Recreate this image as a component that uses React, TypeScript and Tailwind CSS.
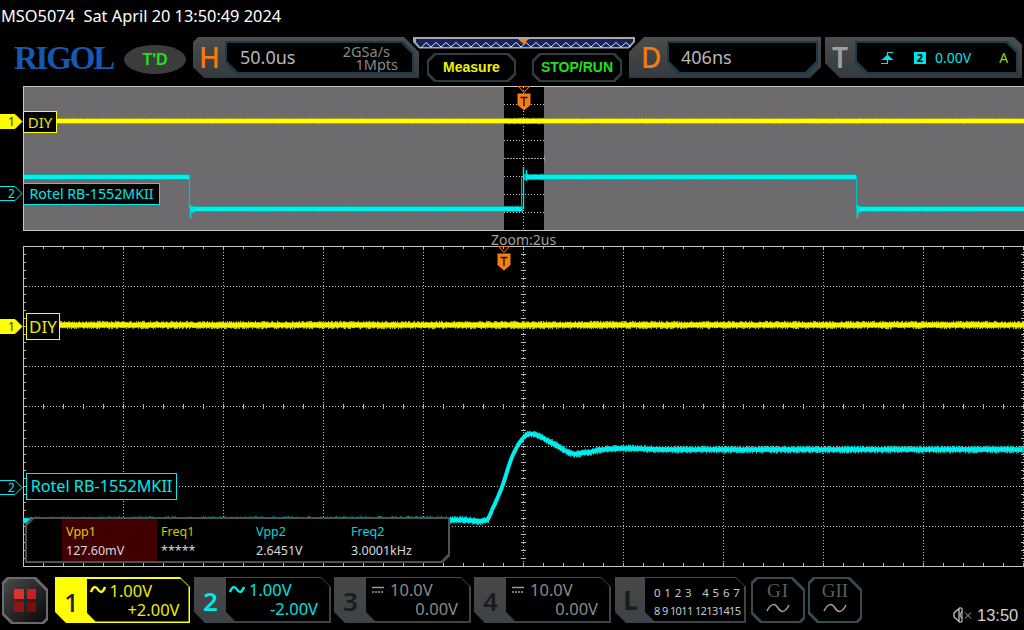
import React from "react";

const FONT = "[font-family:'Noto_Sans','Open_Sans',sans-serif]";
const ARIAL = "[font-family:'Liberation_Sans',sans-serif]";

function rng(seed: number) {
  let s = seed;
  return () => (s = (s * 16807) % 2147483647) / 2147483647;
}

function cr(pts: number[][], x: number) {
  let i = 0;
  while (i < pts.length - 2 && x > pts[i + 1][0]) i++;
  const p1 = pts[i];
  const p2 = pts[i + 1];
  const p0 = pts[Math.max(0, i - 1)];
  const p3 = pts[Math.min(pts.length - 1, i + 2)];
  const t = Math.min(1, Math.max(0, (x - p1[0]) / (p2[0] - p1[0])));
  const a = p1[1];
  const m1 = ((p2[1] - p0[1]) / (p2[0] - p0[0] || 1)) * (p2[0] - p1[0]);
  const m2 = ((p3[1] - p1[1]) / (p3[0] - p1[0] || 1)) * (p2[0] - p1[0]);
  const b = p2[1];
  const t2 = t * t;
  const t3 = t2 * t;
  return (2 * t3 - 3 * t2 + 1) * a + (t3 - 2 * t2 + t) * m1 + (-2 * t3 + 3 * t2) * b + (t3 - t2) * m2;
}

function fuzz(fn: (x: number) => number, x0: number, x1: number, base: number, amp: number, seed: number) {
  const r = rng(seed);
  let d = "";
  for (let x = x0; x <= x1; x += 1) {
    const y = fn(x);
    const u = base + r() * amp;
    const v = base + r() * amp;
    d += `M${x + 0.5} ${(y - u).toFixed(1)}V${(y + v).toFixed(1)}`;
  }
  return d;
}

function Ticks({ w, h, cx, cy, ystep, xstart }: { w: number; h: number; cx: number; cy: number; ystep: number; xstart: number }) {
  let d = "";
  for (let x = xstart; x < w; x += 20) {
    d += `M${x + 0.5} 0v3M${x + 0.5} ${h}v-3M${x + 0.5} ${cy - 2}v5`;
  }
  for (let y = ystep; y < h; y += ystep) {
    d += `M0 ${y + 0.5}h3M${w} ${y + 0.5}h-3M${cx - 2} ${y + 0.5}h5`;
  }
  return <path d={d} stroke="#b8b8b8" strokeWidth="1" fill="none" shapeRendering="crispEdges" />;
}

function ZoomPlot() {
  // panel coordinates: x-23, y-86
  const yellowY = 35;
  const step = (x: number) => {
    if (x < 167) return 91;
    if (x < 500) return 123;
    if (x < 833) return 91;
    return 123;
  };
  const hd = [];
  for (let y = 18; y < 140; y += 18) hd.push(y);
  return (
    <svg className="absolute inset-0 block" width="1001" height="145" viewBox="0 0 1001 145">
      <rect x="0" y="0" width="1001" height="145" fill="#6d6b6d" />
      <rect x="481" y="1" width="40" height="143" fill="#000" />
      {hd.map((y) => (
        <path
          key={y}
          d={`M481 ${y + 0.5}H521`}
          stroke={y === 72 ? "#a0a0a0" : "#c8c8c8"}
          strokeWidth="1"
          strokeDasharray={y === 72 ? "2 1" : "1 2"}
          shapeRendering="crispEdges"
        />
      ))}
      <path d="M500.5 1V144" stroke="#c8c8c8" strokeWidth="1" strokeDasharray="1 2" shapeRendering="crispEdges" />
      <path d="M521.5 70v5" stroke="#999" strokeWidth="1" />
      <path d={fuzz(() => yellowY, 0, 1000, 2.6, 0.8, 11)} stroke="#a8a800" strokeWidth="1" />
      <rect x="0" y={yellowY - 2} width="1001" height="4" fill="#ffff00" />
      <path d={fuzz(step, 0, 1000, 2.6, 0.8, 23)} stroke="#04a8a8" strokeWidth="1" />
      <path d="M0 91H166.5M168 123H499M503 91H833M835 123H1001" stroke="#00f0f0" strokeWidth="4" fill="none" />
      <path d="M166.5 89V122M833.5 89V122" stroke="#00c4c4" strokeWidth="1.2" fill="none" />
      <path d="M167.5 119V132M834.5 119V132" stroke="#00e0e0" strokeWidth="1.6" fill="none" />
      <path d="M170 120V127M837 120V127" stroke="#00e0e0" strokeWidth="1.6" fill="none" />
      <path d="M498.5 123V90" stroke="#00b0b0" strokeWidth="1" />
      <path d="M500.5 123V81M503.5 84V95" stroke="#00e8e8" strokeWidth="1.4" />
      <path d="M0.5 0V145M0 0.5H1001M0 144.5H1001" stroke="#c4c4c4" strokeWidth="1" fill="none" shapeRendering="crispEdges" />
    </svg>
  );
}

const RISE = [
  [0, 274.5],
  [441, 274],
  [464, 274],
  [469, 264],
  [479, 241],
  [489, 211],
  [500, 192],
  [509, 188],
  [527, 196],
  [547, 207],
  [560, 207],
  [580, 203.5],
  [600, 202.5],
  [647, 203.5],
  [1001, 203.5],
];

function MainPlot() {
  const v = [100, 200, 300, 400, 600, 700, 800, 900, 1000];
  const h = [40, 80, 120, 160, 200, 240, 280];
  const fn = (x: number) => cr(RISE, x);
  let line = "M0 " + fn(0).toFixed(1);
  for (let x = 1; x <= 1000; x += 2) line += `L${x} ${fn(x).toFixed(1)}`;
  const ty = 79;
  return (
    <svg className="absolute inset-0 block" width="1001" height="321" viewBox="0 0 1001 321">
      {v.map((x) => (
        <path key={x} d={`M${x + 0.5} 0V320`} stroke="#c0c0c0" strokeWidth="1" strokeDasharray="1 2" shapeRendering="crispEdges" />
      ))}
      {h.map((y) => (
        <path key={y} d={`M0 ${y + 0.5}H1001`} stroke="#c0c0c0" strokeWidth="1" strokeDasharray="1 2" shapeRendering="crispEdges" />
      ))}
      <path d="M500.5 0V320" stroke="#c0c0c0" strokeWidth="1" strokeDasharray="1 2" shapeRendering="crispEdges" />
      <Ticks w={1001} h={320} cx={500} cy={160} ystep={8} xstart={20} />
      <path d="M0.5 0V321M0 0.5H1001M0 320.5H1001" stroke="#c4c4c4" strokeWidth="1" fill="none" shapeRendering="crispEdges" />
      <path d={fuzz(() => ty, 30, 1000, 2.2, 2, 37)} stroke="#c8c800" strokeWidth="1" />
      <rect x="30" y={ty - 2.2} width="971" height="4.4" fill="#f4f400" />
      <path d={fuzz(fn, 0, 1000, 2, 2, 53)} stroke="#04c4c4" strokeWidth="1" />
      <path d={line} stroke="#00eeee" strokeWidth="4" fill="none" />
    </svg>
  );
}

function TMarker() {
  return (
    <svg width="16" height="25" viewBox="0 0 16 25" className="block">
      <path d="M2.5 0.5H13.5L8 6.5Z" fill="none" stroke="#f57f17" strokeWidth="1" />
      <path d="M1.5 7.5H14.5V19L8 24.5L1.5 19Z" fill="#f57f17" />
      <path d="M4.5 11.5H11.5M8 11.5V20" stroke="#2a1400" strokeWidth="1.4" fill="none" />
    </svg>
  );
}

function Tag({ n, filled, color }: { n: string; filled?: boolean; color: string }) {
  return (
    <svg width="23" height="15" viewBox="0 0 23 15" className="block">
      <path
        d="M0 0.5H15L22 7.5L15 14.5H0"
        fill={filled ? color : "#000"}
        stroke={color}
        strokeWidth="1"
      />
      <text x="11.5" y="12" textAnchor="middle" fontSize="12" fontFamily="Noto Sans" fill={filled ? "#333" : color}>
        {n}
      </text>
    </svg>
  );
}

const P_H = "[clip-path:polygon(5px_0,calc(100%-15px)_0,100%_15px,100%_100%,11px_100%,0_calc(100%-11px),0_5px)]";
const P_HI = "[clip-path:polygon(0_0,calc(100%-11px)_0,100%_11px,100%_calc(100%-0px),11px_100%,0_calc(100%-11px))]";
const P_D = "[clip-path:polygon(15px_0,100%_0,100%_calc(100%-11px),calc(100%-11px)_100%,0_100%,0_15px)]";
const P_DI = "[clip-path:polygon(0_0,100%_0,100%_calc(100%-11px),calc(100%-11px)_100%,11px_100%,0_calc(100%-11px))]";
const P_T = "[clip-path:polygon(0_0,calc(100%-8px)_0,100%_8px,100%_100%,15px_100%,0_calc(100%-15px))]";
const P_TI = "[clip-path:polygon(0_0,calc(100%-10px)_0,100%_10px,100%_100%,11px_100%,0_calc(100%-11px))]";
const P_BTN = "[clip-path:polygon(7px_0,calc(100%-7px)_0,100%_7px,100%_calc(100%-7px),calc(100%-7px)_100%,7px_100%,0_calc(100%-7px),0_7px)]";
const P_CH = "[clip-path:polygon(4px_0,calc(100%-10px)_0,100%_10px,100%_100%,11px_100%,0_calc(100%-11px),0_0)]";
const P_CHI = "[clip-path:polygon(0_0,calc(100%-8px)_0,100%_8px,100%_100%,9px_100%,0_calc(100%-9px))]";
const P_G = "[clip-path:polygon(5px_0,calc(100%-12px)_0,100%_12px,100%_calc(100%-4px),calc(100%-4px)_100%,9px_100%,0_calc(100%-9px),0_5px)]";

function Header() {
  return (
    <div className={`h-[37px] pl-px pt-[5px] text-[16.35px] leading-[22px] text-white whitespace-pre ${FONT}`}>
      MSO5074  Sat April 20 13:50:49 2024
    </div>
  );
}

function Strip() {
  let z = "M8 11";
  for (let x = 8; x < 212; x += 10) z += `L${x + 5} 5.5L${x + 10} 10`;
  return (
    <svg width="222" height="12" viewBox="0 0 222 12" className="block">
      <path d="M0 0H222V5L216 11.5H6L0 5Z" fill="#a8a8a8" />
      <path d="M3 2H220V4.5L215 10H7L3 5Z" fill="#14235c" />
      <path d={z} stroke="#e8e8e8" strokeWidth="1" fill="none" />
      <path d="M105 2H116L110.5 7Z" fill="#f5861f" />
    </svg>
  );
}

function TopButton({ label, color, w, className }: { label: string; color: string; w: string; className: string }) {
  return (
    <div className={`${w} ${className} ${P_BTN} h-[29px] p-[2px] bg-[#2f3c44]`}>
      <div className={`${P_BTN} h-full bg-black flex items-center justify-center text-[14px] font-bold ${ARIAL} ${color}`}>
        {label}
      </div>
    </div>
  );
}

function Toolbar() {
  return (
    <div className="h-[49px] flex items-start">
      <div className="ml-[14px] w-[99px] mt-[6px] h-[30px] flex items-center justify-center text-[33px] leading-[30px] font-bold tracking-[-2.2px] text-[#1558b0] [font-family:'Liberation_Serif',serif]">
        RIGOL
      </div>
      <div className={`ml-[11px] mt-[8px] w-[62px] h-[29px] rounded-[50%] bg-[#3c3c3c] flex items-center justify-center text-[16px] font-bold text-[#1ee01e] ${ARIAL}`}>
        T'D
      </div>

      <div className={`ml-[7px] w-[226px] h-[41px] flex ${P_H} bg-linear-to-b from-[#4c4c4c] to-[#333a3e]`}>
        <div className={`w-[32px] pl-[1px] text-center text-[28px] leading-[40px] font-medium text-[#f47b10] ${FONT}`}>H</div>
        <div className={`mt-[4px] w-[189px] h-[33px] p-[2px] bg-[#1b3a4a] ${P_HI}`}>
          <div className={`relative h-full bg-black pl-[13px] flex items-center text-[18px] text-[#b8b8b8] ${P_HI} ${FONT}`}>
            <span className="w-[103px]">50.0us</span>
            <div className="flex flex-col items-end w-[55px] text-[14.5px] leading-[14px] text-[#888]">
              <span className="pr-[8px]">2GSa/s</span>
              <span className="-mt-px">1Mpts</span>
            </div>
          </div>
        </div>
      </div>

      <div className="-ml-[6px] w-[222px] relative">
        <Strip />
        <div className="flex mt-[4px]">
          <TopButton label="Measure" color="text-[#f0f000]" w="w-[89px]" className="ml-[14px]" />
          <TopButton label="STOP/RUN" color="text-[#1fe01f]" w="w-[90px]" className="ml-[16px]" />
        </div>
      </div>

      <div className={`-ml-[6px] w-[192px] h-[41px] flex ${P_D} bg-linear-to-b from-[#4c4c4c] to-[#333a3e]`}>
        <div className={`w-[38px] pl-[12px] text-[28px] leading-[40px] font-medium text-[#f47b10] ${FONT}`}>D</div>
        <div className={`mt-[4px] w-[151px] h-[33px] p-[2px] bg-[#1b3a4a] ${P_DI}`}>
          <div className={`h-full bg-black pl-[12px] flex items-center text-[18px] text-[#b8b8b8] ${P_DI} ${FONT}`}>
            406ns
          </div>
        </div>
      </div>

      <div className={`ml-[4px] w-[197px] h-[41px] flex ${P_T} bg-linear-to-b from-[#4c4c4c] to-[#333a3e]`}>
        <div className={`w-[30px] pl-[7px] text-[28px] leading-[40px] font-semibold text-[#a0a0a0] ${FONT}`}>T</div>
        <div className={`mt-[4px] w-[163px] h-[33px] p-[2px] bg-[#1b3a4a] ${P_TI}`}>
          <div className={`h-full bg-black flex items-center text-[14px] text-[#00e4e4] ${P_TI} ${FONT}`}>
            <svg width="13" height="14" viewBox="0 0 13 14" className="ml-[24px] block">
              <path d="M0 12.5H6.5V1.5H12" stroke="#00e4e4" strokeWidth="1.2" fill="none" />
              <path d="M0.5 9L6.5 3.5L12.5 9Z" fill="#00e4e4" />
            </svg>
            <span className="ml-[20px] w-[12px] h-[12px] bg-[#00e4e4] text-black text-[11px] leading-[12px] text-center font-bold">2</span>
            <span className="ml-[9px]">0.00V</span>
            <span className="ml-[28px] text-[#90d800]">A</span>
          </div>
        </div>
      </div>
    </div>
  );
}

function NameBox({ text, color, cls }: { text: string; color: string; cls: string }) {
  return (
    <div className={`absolute flex items-center justify-center bg-black border ${color} ${cls} ${FONT} whitespace-nowrap`}>
      {text}
    </div>
  );
}

function MeasureBox() {
  const cols = [
    ["Vpp1", "127.60mV", "text-[#e0c800]", "bg-[#400000]"],
    ["Freq1", "*****", "text-[#c8c800]", ""],
    ["Vpp2", "2.6451V", "text-[#00d8d8]", ""],
    ["Freq2", "3.0001kHz", "text-[#00d8d8]", ""],
  ];
  const clip = "[clip-path:polygon(7px_0,100%_0,100%_calc(100%-7px),calc(100%-7px)_100%,0_100%,0_7px)]";
  return (
    <div className={`absolute left-[2px] top-[271px] w-[425px] h-[46px] p-[2px] bg-[#4c5254] ${clip}`}>
      <div className={`h-full bg-black pl-[35px] flex ${clip} ${FONT}`}>
        {cols.map(([a, b, c, bg]) => (
          <div key={a} className={`w-[95px] h-full pl-[4px] pt-[4px] ${bg}`}>
            <div className={`text-[12.5px] leading-[18px] ${c}`}>{a}</div>
            <div className="text-[12.5px] leading-[20px] text-[#d8d8d8]">{b}</div>
          </div>
        ))}
      </div>
    </div>
  );
}

function Plots() {
  return (
    <>
      <div className="relative ml-[23px] w-[1001px] h-[145px]">
        <ZoomPlot />
        <div className="absolute -left-[23px] top-[28px]"><Tag n="1" filled color="#ffff00" /></div>
        <NameBox text="DIY" color="border-[#ffff00] text-[#e8e800]" cls="left-0 top-[25px] w-[34px] h-[22px] text-[15px]" />
        <div className="absolute -left-[23px] top-[100px]"><Tag n="2" color="#00e8e8" /></div>
        <NameBox text="Rotel RB-1552MKII" color="border-[#00e8e8] text-[#00e8e8]" cls="left-0 top-[97px] w-[137px] h-[22px] text-[14.2px]" />
        <div className="absolute left-[493px] top-0"><TMarker /></div>
      </div>
      <div className={`h-[15px] pl-[491px] text-[14px] leading-[17px] text-[#a0a0a0] ${FONT}`}>Zoom:2us</div>
      <div className="relative ml-[23px] w-[1001px] h-[321px]">
        <MainPlot />
        <div className="absolute -left-[23px] top-[73px]"><Tag n="1" filled color="#ffff00" /></div>
        <NameBox text="DIY" color="border-[#ffff00] text-[#e8e800]" cls="left-[3px] top-[67px] w-[34px] h-[27px] text-[17px]" />
        <div className="absolute -left-[23px] top-[234px]"><Tag n="2" color="#00e8e8" /></div>
        <NameBox text="Rotel RB-1552MKII" color="border-[#00e8e8] text-[#00e8e8]" cls="left-[3px] top-[227px] w-[151px] h-[27px] text-[16.2px]" />
        <MeasureBox />
        <div className="absolute left-[473px] top-0"><TMarker /></div>
      </div>
    </>
  );
}

function Coupling({ ac, color }: { ac: boolean; color: string }) {
  return ac ? (
    <svg width="16" height="12" viewBox="0 0 16 12" className="block shrink-0">
      <path d="M1 8C3 2 6 2 8 5.5C10 9 13 9 15 3" stroke={color} strokeWidth="2.4" fill="none" />
    </svg>
  ) : (
    <svg width="14" height="10" viewBox="0 0 14 10" className="block shrink-0">
      <path d="M1 2.5H13" stroke={color} strokeWidth="1.6" />
      <path d="M1 7H13" stroke={color} strokeWidth="1.6" strokeDasharray="2 1" />
    </svg>
  );
}

function Channel({
  n, v, off, numCls, txtCls, color, ml, ac,
}: {
  n: string; v: string; off: string; numCls: string; txtCls: string; color: string; ml: string; ac: boolean;
}) {
  return (
    <div className={`${ml} w-[137px] h-[46px] flex bg-linear-to-b from-[#484848] to-[#3c4246] p-[1px] pr-[2px] pb-[2px] ${P_CH} ${FONT}`}>
      <div className={`w-[31px] shrink-0 text-center text-[26px] leading-[46px] font-semibold ${numCls}`}>{n}</div>
      <div className={`flex-1 bg-black ${P_CHI} pt-[2px] pr-[11px] ${txtCls} text-[16.5px] leading-[19px]`}>
        <div className={`flex items-center ${ac ? "pl-[3px] gap-[4px]" : "pl-[5px] gap-[5px]"} h-[19px]`}>
          <Coupling ac={ac} color={color} />
          <span>{v}</span>
        </div>
        <div className="text-right">{off}</div>
      </div>
    </div>
  );
}

function Channel1() {
  return (
    <div className={`ml-[7px] w-[135px] h-[46px] flex bg-[#ffff00] p-[1.5px] ${P_CH} ${FONT}`}>
      <div className="w-[30px] shrink-0 text-center text-[26px] leading-[46px] font-medium text-[#222]">1</div>
      <div className={`flex-1 bg-black ${P_CHI} pt-[2px] pr-[9px] text-[#ecec00] text-[16.5px] leading-[19px]`}>
        <div className="flex items-center pl-[3px] gap-[4px] h-[19px]">
          <Coupling ac color="#ffff00" />
          <span>1.00V</span>
        </div>
        <div className="text-right">+2.00V</div>
      </div>
    </div>
  );
}

function GroupBtn({ label, ml, track }: { label: string; ml: string; track: string }) {
  return (
    <div className={`${ml} w-[54px] h-[46px] p-[2px] bg-[#3a4a52] ${P_G}`}>
      <div className={`h-full bg-black ${P_G} flex flex-col items-center`}>
        <div className={`text-[19px] leading-[22px] mt-[1px] text-[#5c5c5c] ${track} [font-family:'Liberation_Serif',serif] whitespace-nowrap`}>{label}</div>
        <svg width="26" height="12" viewBox="0 0 26 12" className="block">
          <path d="M2 9C6 1 10 1 13 6C16 11 20 11 24 3" stroke="#a0a0a0" strokeWidth="1.5" fill="none" />
        </svg>
      </div>
    </div>
  );
}

function BottomBar() {
  return (
    <div className="relative h-[63px] pt-[10px] flex items-start">
      <div className={`ml-[2px] w-[46px] h-[47px] p-[2px] bg-[#6a6a6a] ${P_G}`}>
        <div className={`h-full ${P_G} bg-linear-to-br from-[#4a4a4a] to-[#0a0a0a] grid grid-cols-2 gap-[3px] px-[10px] py-[10px]`}>
          <div className="bg-[#e03030]" />
          <div className="bg-[#c82020]" />
          <div className="bg-[#901414]" />
          <div className="bg-[#7c0c0c]" />
        </div>
      </div>
      <Channel1 />
      <Channel ml="ml-[4px]" n="2" v="1.00V" off="-2.00V" numCls="text-[#00e8e8]" txtCls="text-[#00e0e0]" color="#00e8e8" ac />
      <Channel ml="ml-[3px]" n="3" v="10.0V" off="0.00V" numCls="text-[#1c1c1c]" txtCls="text-[#8a8a8a]" color="#9a9a9a" ac={false} />
      <Channel ml="ml-[3px]" n="4" v="10.0V" off="0.00V" numCls="text-[#1c1c1c]" txtCls="text-[#8a8a8a]" color="#9a9a9a" ac={false} />
      <div className={`ml-[4px] w-[131px] h-[46px] flex bg-linear-to-b from-[#484848] to-[#3c4246] p-[1px] pr-[2px] pb-[2px] ${P_CH} ${FONT}`}>
        <div className="w-[29px] shrink-0 text-center text-[26px] leading-[44px] font-bold text-[#1c1c1c]">L</div>
        <div className={`flex-1 min-w-0 bg-black ${P_CHI} pl-[9px] pt-[6px] text-[#c8c8c8] whitespace-pre`}>
          <div className="text-[11.5px] leading-[18px] tracking-[0.4px]">0 1 2 3   4 5 6 7</div>
          <div className="text-[11px] leading-[18px] tracking-[-0.6px]">8 9 1011 12131415</div>
        </div>
      </div>
      <GroupBtn label="GI" ml="ml-[5px]" track="tracking-[1px]" />
      <GroupBtn label="GII" ml="ml-[3px]" track="tracking-[0px]" />
      <div className="ml-[90px] mt-[28px] flex items-center">
        <svg width="22" height="18" viewBox="0 0 22 18" className="block">
          <path d="M2 7L7 2.5V15.5L2 11Z" fill="none" stroke="#d0d0d0" strokeWidth="1.2" />
          <path d="M7 2H10V16H7M10 5L8 9L10 13" fill="none" stroke="#d0d0d0" strokeWidth="1" />
          <path d="M13 6.5L19 12.5M19 6.5L13 12.5" stroke="#a8a8a8" strokeWidth="1" />
        </svg>
        <span className={`ml-[3px] text-[16.5px] leading-[20px] text-[#d0d0d0] ${ARIAL}`}>13:50</span>
      </div>
    </div>
  );
}

export default function App() {
  return (
    <div className="w-[1024px] h-[630px] bg-black overflow-hidden flex flex-col">
      <Header />
      <Toolbar />
      <Plots />
      <BottomBar />
    </div>
  );
}
